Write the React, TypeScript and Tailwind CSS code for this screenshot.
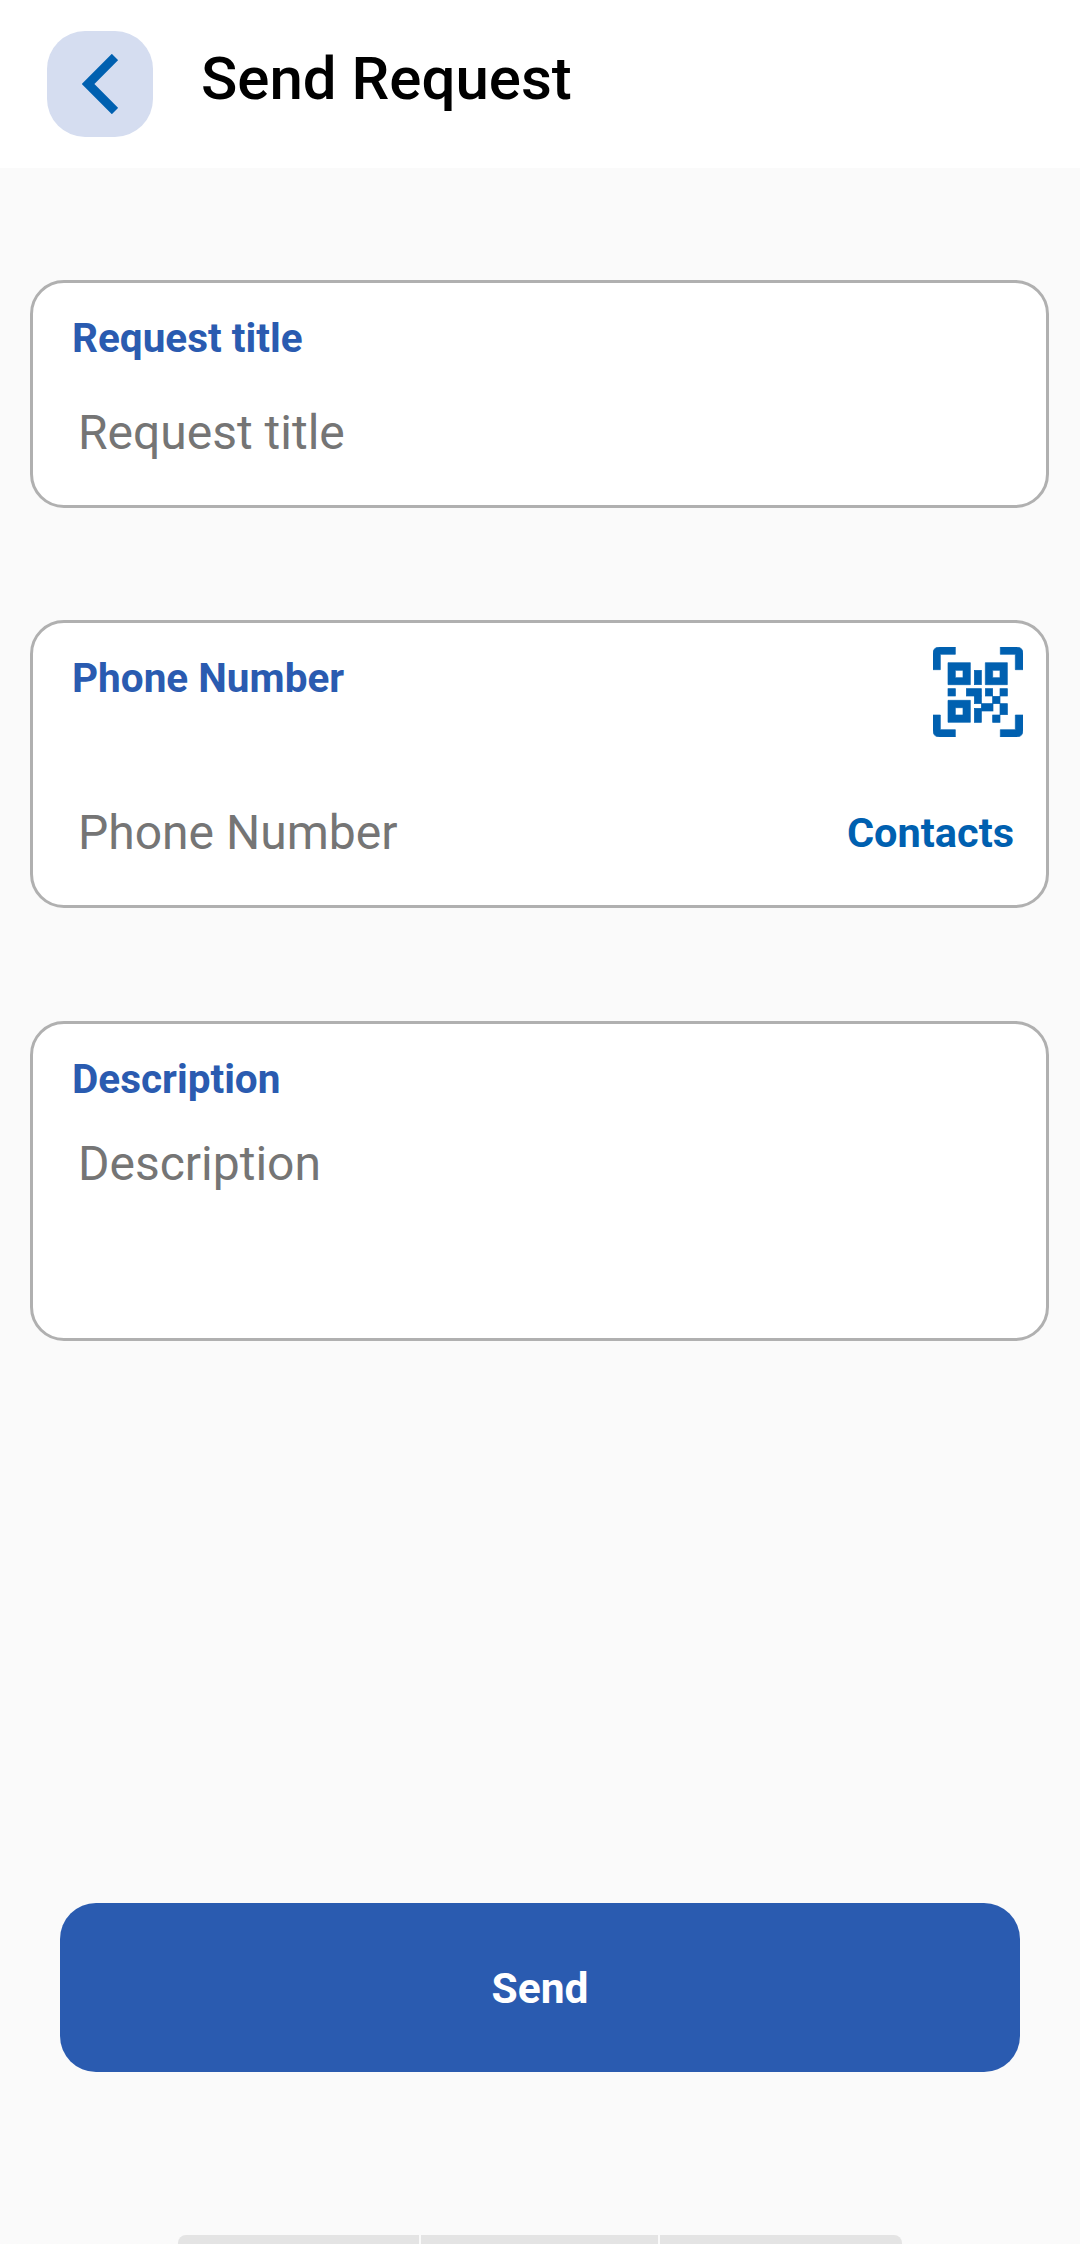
const BLUE = "#0060b0";

function QrIcon() {
  return (
    <svg width="90" height="90" viewBox="100 80 270 270" fill={BLUE} stroke={BLUE} strokeWidth="2">
      <path d="M122 148H100V100Q100 80 120 80H167V102H122Z" />
      <path d="M302 80H350Q370 80 370 100V148H347V102H302Z" />
      <path d="M100 284H122V328H167V350H120Q100 350 100 330Z" />
      <path d="M347 284H370V330Q370 350 350 350H302V328H347Z" />
      <path fillRule="evenodd" d="M145 127H212V193H145ZM167 150V172H190V150Z" />
      <path fillRule="evenodd" d="M257 127H323V193H257ZM279 150V172H301V150Z" />
      <path fillRule="evenodd" d="M145 240H212V306H145ZM167 262V284H190V262Z" />
      <rect x="224" y="150" width="21" height="43" />
      <rect x="145" y="205" width="22" height="22" />
      <rect x="200" y="205" width="45" height="22" />
      <rect x="224" y="227" width="21" height="23" />
      <rect x="257" y="205" width="22" height="22" />
      <rect x="301" y="205" width="22" height="22" />
      <rect x="279" y="228" width="22" height="22" />
      <rect x="224" y="264" width="21" height="42" />
      <rect x="245" y="250" width="35" height="22" />
      <rect x="301" y="250" width="22" height="33" />
      <rect x="279" y="284" width="22" height="22" />
    </svg>
  );
}

export default function App() {
  return (
    <div className="flex h-[2244px] w-[1080px] flex-col overflow-hidden bg-[#fafafa] font-['Roboto',sans-serif]">
      <header className="flex h-[168px] shrink-0 items-center gap-[48px] bg-white pl-[47px]">
        <button className="flex h-[106px] w-[106px] items-center justify-center rounded-[38px] bg-[#d5ddf0]">
          <svg width="36" height="60" viewBox="0 0 36 60" fill="none" stroke={BLUE} strokeWidth="9">
            <path d="M33 3 6 30l27 27" />
          </svg>
        </button>
        <h1 className="-mt-[10px] text-[60px] leading-none font-medium text-black">Send Request</h1>
      </header>

      <div className="ml-[30px] mr-[31px] mt-[112px] flex h-[228px] flex-col rounded-[34px] border-[3px] border-[#b0b0b0] bg-white pl-[39px] pt-[32px]">
        <label className="text-[40.5px] leading-[46px] font-bold text-[#2a5bb0]">Request title</label>
        <span className="mt-[45px] pl-[6px] text-[48px] leading-[54px] text-[#757575]">Request title</span>
      </div>

      <div className="ml-[30px] mr-[31px] mt-[112px] flex h-[288px] flex-col rounded-[34px] border-[3px] border-[#b0b0b0] bg-white pl-[39px] pr-[32px]">
        <div className="flex items-start justify-between">
          <label className="mt-[32px] text-[40.5px] leading-[46px] font-bold text-[#2a5bb0]">Phone Number</label>
          <div className="-mr-[9px] mt-[24px]">
            <QrIcon />
          </div>
        </div>
        <div className="mt-[69px] flex items-center justify-between pl-[6px]">
          <span className="text-[48px] leading-[54px] text-[#757575]">Phone Number</span>
          <span className="text-[41.5px] leading-[54px] font-bold text-[#0060b0]">Contacts</span>
        </div>
      </div>

      <div className="ml-[30px] mr-[31px] mt-[113px] flex h-[320px] flex-col rounded-[34px] border-[3px] border-[#b0b0b0] bg-white pl-[39px] pt-[32px]">
        <label className="text-[40.5px] leading-[46px] font-bold text-[#2a5bb0]">Description</label>
        <span className="mt-[35px] pl-[6px] text-[48px] leading-[54px] text-[#757575]">Description</span>
      </div>

      <button className="mx-[60px] mt-auto flex h-[169px] shrink-0 items-center justify-center rounded-[36px] bg-[#2a5bb0] pt-[2px] text-[42.5px] font-bold text-white">
        Send
      </button>

      <div className="mx-[178px] mt-[163px] flex h-[9px] shrink-0 gap-[2px] overflow-hidden rounded-t-[8px]">
        <div className="w-[241px] bg-[#e4e4e4]" />
        <div className="w-[237px] bg-[#e4e4e4]" />
        <div className="flex-1 bg-[#e4e4e4]" />
      </div>
    </div>
  );
}
